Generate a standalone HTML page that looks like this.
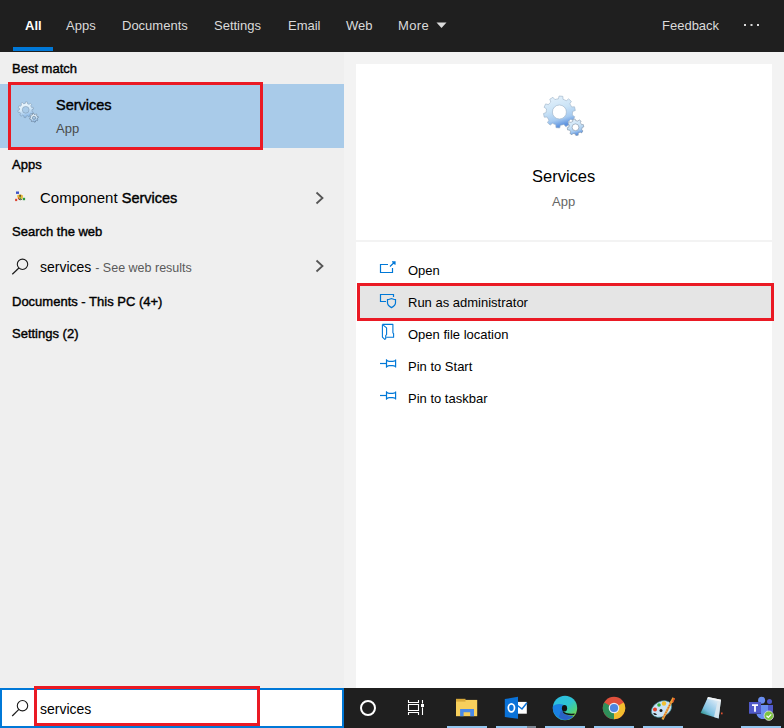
<!DOCTYPE html>
<html><head><meta charset="utf-8">
<style>
*{margin:0;padding:0;box-sizing:border-box}
html,body{width:784px;height:728px;overflow:hidden;background:#f3f3f3;font-family:"Liberation Sans",sans-serif;}
.a{position:absolute;white-space:nowrap;line-height:1}
#top{position:absolute;left:0;top:0;width:784px;height:52px;background:#1f1f1f}
.tab{position:absolute;top:19px;font-size:13px;color:#dadada;line-height:14px}
#uline{position:absolute;left:13px;top:47px;width:40px;height:4px;background:#0078d7}
#left{position:absolute;left:0;top:52px;width:344px;height:636px;background:#efefef}
#card1{position:absolute;left:356px;top:64px;width:416px;height:176px;background:#fff}
#card2{position:absolute;left:356px;top:242px;width:416px;height:446px;background:#fff}
.hdr{position:absolute;left:12px;font-size:13px;color:#000;-webkit-text-stroke:0.4px #000;line-height:14px}
.sb{-webkit-text-stroke:0.4px #000}
.red{position:absolute;border:3px solid #ea1a24}
.act{position:absolute;left:408px;font-size:13px;color:#000;line-height:14px}
.ico{position:absolute}
#search{position:absolute;left:0;top:688px;width:344px;height:40px;background:#fff;border:2px solid #0078d7}
#task{position:absolute;left:344px;top:688px;width:440px;height:40px;background:#1f1f1f}
.ul{position:absolute;top:726px;height:2px;background:#94c6ef}
</style></head><body>
<div id="top">
  <div class="tab" style="left:25px;color:#fff;font-weight:bold">All</div>
  <div class="tab" style="left:66px">Apps</div>
  <div class="tab" style="left:122px">Documents</div>
  <div class="tab" style="left:214px">Settings</div>
  <div class="tab" style="left:288px">Email</div>
  <div class="tab" style="left:346px">Web</div>
  <div class="tab" style="left:398px;letter-spacing:0.4px">More</div>
  <svg class="ico" style="left:436px;top:22px" width="11" height="7" viewBox="0 0 11 7"><path d="M0.5 0.5 L10.5 0.5 L5.5 6 Z" fill="#dadada"/></svg>
  <div class="tab" style="left:662px">Feedback</div>
  <svg class="ico" style="left:743px;top:23px" width="18" height="4" viewBox="0 0 18 4"><rect x="1" y="1" width="2" height="2" fill="#dadada"/><rect x="7.5" y="1" width="2" height="2" fill="#dadada"/><rect x="14" y="1" width="2" height="2" fill="#dadada"/></svg>
  <div id="uline"></div>
</div>

<div style="position:absolute;left:0;top:52px;width:344px;height:636px;background:#efefef"></div>
<div class="hdr" style="top:62px">Best match</div>
<div style="position:absolute;left:0;top:84px;width:344px;height:64px;background:#a9cbe9"></div>
<div class="red" style="left:8px;top:82px;width:255px;height:68px"></div>
<!-- small services icon -->
<svg class="ico" style="left:16px;top:100px" width="24" height="24" viewBox="0 0 24 24">
  <defs><linearGradient id="gs" x1="0" y1="0" x2="0.3" y2="1"><stop offset="0" stop-color="#f6fbff"/><stop offset="0.55" stop-color="#d8ecfa"/><stop offset="1" stop-color="#8fbbe8"/></linearGradient></defs>
  <path fill-rule="evenodd" fill="url(#gs)" stroke="#7890a8" stroke-width="0.5" d="M15.97 10.43 L15.83 11.27 L17.25 12.12 L16.51 13.80 L14.92 13.32 L14.40 13.99 L13.79 14.59 L14.45 16.11 L12.86 17.04 L11.86 15.72 L11.04 15.96 L10.20 16.08 L9.83 17.70 L8.00 17.52 L7.96 15.86 L7.16 15.57 L6.41 15.17 L5.16 16.27 L3.79 15.05 L4.74 13.68 L4.26 12.98 L3.88 12.21 L2.23 12.36 L1.84 10.57 L3.40 10.02 L3.43 9.17 L3.57 8.33 L2.15 7.48 L2.89 5.80 L4.48 6.28 L5.00 5.61 L5.61 5.01 L4.95 3.49 L6.54 2.56 L7.54 3.88 L8.36 3.64 L9.20 3.52 L9.57 1.90 L11.40 2.08 L11.44 3.74 L12.24 4.03 L12.99 4.43 L14.24 3.33 L15.61 4.55 L14.66 5.92 L15.14 6.62 L15.52 7.39 L17.17 7.24 L17.56 9.03 L16.00 9.58 Z M6.30 9.80 a3.40 3.40 0 1 0 6.80 0 a3.40 3.40 0 1 0 -6.80 0 Z"/>
  <path fill-rule="evenodd" fill="url(#gs)" stroke="#56687c" stroke-width="0.5" d="M21.33 18.48 L21.17 19.03 L21.97 19.70 L21.26 20.76 L20.33 20.28 L19.88 20.63 L19.38 20.91 L19.46 21.95 L18.21 22.20 L17.89 21.20 L17.32 21.13 L16.77 20.97 L16.10 21.77 L15.04 21.06 L15.52 20.13 L15.17 19.68 L14.89 19.18 L13.85 19.26 L13.60 18.01 L14.60 17.69 L14.67 17.12 L14.83 16.57 L14.03 15.90 L14.74 14.84 L15.67 15.32 L16.12 14.97 L16.62 14.69 L16.54 13.65 L17.79 13.40 L18.11 14.40 L18.68 14.47 L19.23 14.63 L19.90 13.83 L20.96 14.54 L20.48 15.47 L20.83 15.92 L21.11 16.42 L22.15 16.34 L22.40 17.59 L21.40 17.91 Z M16.40 17.80 a1.60 1.60 0 1 0 3.20 0 a1.60 1.60 0 1 0 -3.20 0 Z"/>
</svg>
<div class="a sb" style="left:56px;top:98px;font-size:14.5px;color:#000">Services</div>
<div class="a" style="left:56px;top:122px;font-size:13px;color:#4a4a4a">App</div>

<div class="hdr" style="top:158px">Apps</div>
<svg class="ico" style="left:14px;top:190px" width="12" height="12" viewBox="0 0 12 12">
  <rect x="2" y="1.5" width="3" height="2.4" fill="#3a52c8"/>
  <path d="M3 5.5 Q5 4.2 7 4.6 L9 5.5 L8.6 8.6 Q6.5 10 4 9 Z" fill="#e6b838"/>
  <rect x="5.5" y="4.8" width="1.2" height="2" fill="#2a2a2a"/>
  <path d="M4.5 8.6 Q6.5 10.3 8.3 8.8 L7.8 9.8 Q6 10.6 4.8 9.6 Z" fill="#202020"/>
  <rect x="4" y="7.5" width="1.2" height="1.6" fill="#d84030"/>
  <rect x="5.8" y="7.5" width="1.2" height="1.6" fill="#40b040"/>
  <rect x="1.1" y="8.8" width="2.1" height="2.3" fill="#dc4432"/>
  <rect x="8.8" y="7.8" width="2.3" height="2.4" fill="#2f9a3c"/>
</svg>
<div class="a" style="left:40px;top:190px;font-size:15px;color:#000">Component <span class="sb" style="font-size:14.5px">Services</span></div>
<svg class="ico" style="left:314px;top:190px" width="12" height="16" viewBox="0 0 12 16"><path d="M2.5 2.5 L8.5 8 L2.5 13.5" fill="none" stroke="#555" stroke-width="1.8"/></svg>

<div class="hdr" style="top:225px">Search the web</div>
<svg class="ico" style="left:11px;top:258px" width="18" height="17" viewBox="0 0 18 17">
  <circle cx="11.5" cy="6.3" r="5.2" fill="none" stroke="#1a1a1a" stroke-width="1.1"/>
  <path d="M7.9 10 L1.3 16.2" stroke="#1a1a1a" stroke-width="1.2"/>
</svg>
<div class="a" style="left:40px;top:260px;font-size:14px;color:#000">services <span style="font-size:12.5px;color:#5a5a5a">- See web results</span></div>
<svg class="ico" style="left:314px;top:258px" width="12" height="16" viewBox="0 0 12 16"><path d="M2.5 2.5 L8.5 8 L2.5 13.5" fill="none" stroke="#555" stroke-width="1.8"/></svg>

<div class="hdr" style="top:295px">Documents - This PC (4+)</div>
<div class="hdr" style="top:327px">Settings (2)</div>

<div id="card1"></div>
<div id="card2"></div>
<!-- big services icon -->
<svg class="ico" style="left:542px;top:95px" width="44" height="44" viewBox="0 0 44 44">
  <defs><linearGradient id="gb" x1="0" y1="0" x2="0.3" y2="1"><stop offset="0" stop-color="#eaf4fc"/><stop offset="0.5" stop-color="#cae3f6"/><stop offset="0.8" stop-color="#a6caf0"/><stop offset="1" stop-color="#5f94e0"/></linearGradient></defs>
  <path fill-rule="evenodd" fill="url(#gb)" stroke="#9ab0c6" stroke-width="0.6" d="M30.53 18.32 L30.24 20.07 L32.70 21.70 L31.20 25.09 L28.34 24.38 L27.25 25.79 L25.98 27.03 L27.01 29.79 L23.81 31.66 L21.92 29.40 L20.21 29.90 L18.44 30.16 L17.66 33.00 L13.97 32.63 L13.76 29.69 L12.09 29.08 L10.51 28.26 L8.21 30.10 L5.44 27.62 L7.00 25.13 L6.00 23.65 L5.21 22.06 L2.27 22.19 L1.48 18.56 L4.21 17.46 L4.27 15.68 L4.56 13.93 L2.10 12.30 L3.60 8.91 L6.46 9.62 L7.55 8.21 L8.82 6.97 L7.79 4.21 L10.99 2.34 L12.88 4.60 L14.59 4.10 L16.36 3.84 L17.14 1.00 L20.83 1.37 L21.04 4.31 L22.71 4.92 L24.29 5.74 L26.59 3.90 L29.36 6.38 L27.80 8.87 L28.80 10.35 L29.59 11.94 L32.53 11.81 L33.32 15.44 L30.59 16.54 Z M10.40 17.00 a7.00 7.00 0 1 0 14.00 0 a7.00 7.00 0 1 0 -14.00 0 Z"/>
  <path fill-rule="evenodd" fill="url(#gb)" stroke="#7d90a6" stroke-width="0.6" d="M39.97 33.61 L39.66 34.68 L40.98 35.89 L39.64 37.88 L38.02 37.11 L37.15 37.80 L36.17 38.34 L36.25 40.13 L33.89 40.59 L33.29 38.90 L32.19 38.77 L31.12 38.46 L29.91 39.78 L27.92 38.44 L28.69 36.82 L28.00 35.95 L27.46 34.97 L25.67 35.05 L25.21 32.69 L26.90 32.09 L27.03 30.99 L27.34 29.92 L26.02 28.71 L27.36 26.72 L28.98 27.49 L29.85 26.80 L30.83 26.26 L30.75 24.47 L33.11 24.01 L33.71 25.70 L34.81 25.83 L35.88 26.14 L37.09 24.82 L39.08 26.16 L38.31 27.78 L39.00 28.65 L39.54 29.63 L41.33 29.55 L41.79 31.91 L40.10 32.51 Z M30.10 32.30 a3.40 3.40 0 1 0 6.80 0 a3.40 3.40 0 1 0 -6.80 0 Z"/>
</svg>
<div class="a" style="left:532px;top:168px;font-size:16.5px;color:#000">Services</div>
<div class="a" style="left:552px;top:195px;font-size:13px;color:#666">App</div>

<div style="position:absolute;left:360px;top:286px;width:411px;height:32px;background:#e5e5e5"></div>
<div class="red" style="left:357px;top:283px;width:417px;height:38px"></div>

<svg class="ico" style="left:378px;top:260px" width="20" height="16" viewBox="0 0 20 16">
  <path d="M10 4.5 H2.5 V12.5 H14.5 V8" fill="none" stroke="#0078d7" stroke-width="1.2"/>
  <path d="M12 6.5 L17 1.8 M14 1.8 H17 V4.8" fill="none" stroke="#0078d7" stroke-width="1.2"/>
</svg>
<div class="act" style="left:408px;top:264px">Open</div>
<svg class="ico" style="left:378px;top:292px" width="20" height="18" viewBox="0 0 20 18">
  <path d="M8 9.5 H2.5 V2.5 H15.5 V5" fill="none" stroke="#0078d7" stroke-width="1.2"/>
  <path d="M9.5 7.6 C11.5 7.6 12.5 6.7 13.5 6.7 C14.5 6.7 15.5 7.6 17.5 7.6 V10.8 C17.5 13.2 15.5 14.6 13.5 15.6 C11.5 14.6 9.5 13.2 9.5 10.8 Z" fill="none" stroke="#0078d7" stroke-width="1.2"/>
</svg>
<div class="act" style="left:408px;top:296px">Run as administrator</div>
<svg class="ico" style="left:378px;top:322px" width="20" height="20" viewBox="0 0 20 20">
  <path d="M4.4 2.4 H14.9 V10.9 L15.6 11.6 V15.3 H8.2" fill="none" stroke="#0078d7" stroke-width="1.1" stroke-linejoin="round"/>
  <path d="M4.4 2.4 V15.1 L6.8 17.4 L7.7 16.8 V13.6 L8.6 12.5 V5.9 L5.2 3.1" fill="none" stroke="#0078d7" stroke-width="1.1" stroke-linejoin="round"/>
</svg>
<div class="act" style="left:408px;top:328px">Open file location</div>
<svg class="ico" style="left:378px;top:357px" width="20" height="14" viewBox="0 0 20 14">
  <path d="M2 6.5 H8" stroke="#0078d7" stroke-width="1.2"/>
  <path d="M8.5 2.2 V10.8 M17.6 2.6 V10.4 M8.5 3.4 Q10.5 4.3 11.2 4.3 H14.8 Q15.6 4.3 17.6 3.6 M8.5 9.6 Q10.5 8.7 11.2 8.7 H14.8 Q15.6 8.7 17.6 9.4" fill="none" stroke="#0078d7" stroke-width="1.2"/>
</svg>
<div class="act" style="left:408px;top:360px">Pin to Start</div>
<svg class="ico" style="left:378px;top:389px" width="20" height="14" viewBox="0 0 20 14">
  <path d="M2 6.5 H8" stroke="#0078d7" stroke-width="1.2"/>
  <path d="M8.5 2.2 V10.8 M17.6 2.6 V10.4 M8.5 3.4 Q10.5 4.3 11.2 4.3 H14.8 Q15.6 4.3 17.6 3.6 M8.5 9.6 Q10.5 8.7 11.2 8.7 H14.8 Q15.6 8.7 17.6 9.4" fill="none" stroke="#0078d7" stroke-width="1.2"/>
</svg>
<div class="act" style="left:408px;top:392px">Pin to taskbar</div>

<div id="search"></div>
<svg class="ico" style="left:11px;top:699px" width="19" height="18" viewBox="0 0 19 18">
  <circle cx="11.5" cy="6.7" r="5.2" fill="none" stroke="#1a1a1a" stroke-width="1.1"/>
  <path d="M7.9 10.4 L1.2 17" stroke="#1a1a1a" stroke-width="1.2"/>
</svg>
<div class="a" style="left:40px;top:702px;font-size:14px;color:#000">services</div>
<div class="red" style="left:34px;top:686px;width:226px;height:40px"></div>

<div id="task"></div>
<svg class="ico" style="left:358px;top:698px" width="20" height="20" viewBox="0 0 20 20"><circle cx="10" cy="10" r="7" fill="none" stroke="#fff" stroke-width="2"/></svg>
<svg class="ico" style="left:406px;top:698px" width="20" height="20" viewBox="0 0 20 20">
  <path d="M2.5 2 V4.5 H12.5 V2 M2.5 6.5 H12.5 V12.5 H2.5 Z M2.5 17 V14.5 H12.5 V17 M16.5 2 V5.5 M16.5 9.5 V17" fill="none" stroke="#fff" stroke-width="1.1"/>
  <rect x="15" y="6" width="3" height="3" fill="#fff"/>
</svg>

<!-- taskbar apps -->
<div class="ul" style="left:447px;width:40px"></div>
<div class="ul" style="left:496px;width:31px"></div>
<div class="ul" style="left:527px;width:9px;background:#7d8896"></div>
<div class="ul" style="left:545px;width:40px"></div>
<div class="ul" style="left:594px;width:40px"></div>
<div class="ul" style="left:643px;width:40px"></div>
<div class="ul" style="left:741px;width:40px"></div>
<!-- explorer -->
<svg class="ico" style="left:454px;top:696px" width="26" height="22" viewBox="0 0 26 22">
  <rect x="2" y="3.9" width="21.2" height="16.3" fill="#f7cf5c"/>
  <rect x="2" y="2.8" width="9.5" height="2.8" fill="#d9aa3a"/>
  <path d="M6.1 12.9 H20 V20.2 H16.2 V16.2 H9.6 V20.2 H6.1 Z" fill="#4a8ae8"/>
</svg>
<!-- outlook -->
<svg class="ico" style="left:504px;top:696px" width="26" height="24" viewBox="0 0 26 24">
  <rect x="14" y="5.9" width="8.8" height="11.8" fill="#fff"/>
  <path d="M13.5 9.5 L18 13 L23 6.8" fill="none" stroke="#0a72d8" stroke-width="1.5"/>
  <path d="M0.8 3 L14 0.8 V22.8 L0.8 21 Z" fill="#0a72d8"/>
  <ellipse cx="7.4" cy="11.8" rx="3.1" ry="4" fill="none" stroke="#fff" stroke-width="1.7"/>
</svg>
<!-- edge -->
<svg class="ico" style="left:552px;top:695px" width="26" height="26" viewBox="0 0 26 26">
  <defs>
    <linearGradient id="eg1" x1="0.3" y1="0" x2="1" y2="0.8"><stop offset="0" stop-color="#2cbfe0"/><stop offset="0.45" stop-color="#2fc4d2"/><stop offset="0.75" stop-color="#48d088"/><stop offset="1" stop-color="#8cd640"/></linearGradient>
  </defs>
  <circle cx="13" cy="13" r="12.2" fill="url(#eg1)"/>
  <path d="M0.9 11 Q6 7.5 12 10 L11 17 Q12 21 21.5 21.5 A12.2 12.2 0 0 1 0.9 11 Z" fill="#1a80e2"/>
  <path d="M9 15 Q11 20.5 21.5 21 Q19 23.5 15 25 Q10 25 7 22 Z" fill="#2a62c4"/>
  <ellipse cx="12.5" cy="13.2" rx="2.6" ry="3.3" fill="#121212"/>
  <path d="M10.5 15.5 Q14 19.5 22.8 18.6 L22.2 20 Q14 21 11 17.5 Z" fill="#121212"/>
</svg>
<!-- chrome -->
<svg class="ico" style="left:602px;top:696px" width="24" height="24" viewBox="0 0 24 24">
  <circle cx="12" cy="12" r="11.2" fill="#e0503c"/>
  <path d="M12 12 L21.7 6.4 A11.2 11.2 0 0 1 12 23.2 Z" fill="#f2bd2e"/>
  <path d="M12 12 L12 23.2 A11.2 11.2 0 0 1 2.3 6.4 Z" fill="#2f8f5a"/>
  <circle cx="12" cy="12" r="5.3" fill="#e8eef8"/>
  <circle cx="12" cy="12" r="4.1" fill="#4f86e0"/>
</svg>
<!-- paint -->
<svg class="ico" style="left:650px;top:696px" width="26" height="24" viewBox="0 0 26 24">
  <ellipse cx="11.5" cy="13" rx="10.8" ry="7.6" transform="rotate(-28 11.5 13)" fill="#c8e2f6" stroke="#2a7a80" stroke-width="0.6"/>
  <path d="M3 17.5 Q5 16 7 18.5 Q5 20 3 17.5 Z" fill="#1f1f1f"/>
  <circle cx="11" cy="14.5" r="1.5" fill="#151515"/>
  <circle cx="5" cy="13.5" r="2" fill="#e0402a"/>
  <circle cx="9" cy="9" r="1.8" fill="#35b040"/>
  <circle cx="14" cy="7.5" r="2.2" fill="#f2c030"/>
  <path d="M12.5 23.5 L21.5 5.5" stroke="#eab040" stroke-width="2.2"/>
  <path d="M13.5 21.5 L21 6.5" stroke="#d84830" stroke-width="1.2" stroke-dasharray="1 1.6"/>
  <path d="M20.3 5.5 L22.5 1.2 L25 2.6 L22.8 7 Z" fill="#f0a030"/>
  <path d="M23.6 2 L25 2.6 L23.2 6.4 L22.2 6 Z" fill="#e04a2a"/>
</svg>
<!-- notepad-like -->
<svg class="ico" style="left:699px;top:696px" width="25" height="24" viewBox="0 0 25 24">
  <defs><linearGradient id="ng" x1="0.8" y1="0" x2="0.1" y2="0.9"><stop offset="0" stop-color="#eef3f6"/><stop offset="0.35" stop-color="#b4d8f0"/><stop offset="0.7" stop-color="#7cc0e0"/><stop offset="1" stop-color="#1f8a7a"/></linearGradient></defs>
  <path d="M9 1 L22 3.7 L19.6 22.4 L1.6 17 Z" fill="url(#ng)"/>
  <path d="M22 3.7 L19.6 22.4 L15 21 L18.5 6 Z" fill="#dfe9ee" opacity="0.85"/>
  <path d="M9 1 L22 3.7 L21.7 5.5 L8.2 2.8 Z" fill="#f4f6f7"/>
  <rect x="22" y="16.5" width="1.6" height="1.8" fill="#e05030"/>
</svg>
<!-- teams -->
<svg class="ico" style="left:748px;top:696px" width="28" height="26" viewBox="0 0 28 26">
  <circle cx="13.6" cy="4.3" r="3.5" fill="#6a8ef0"/>
  <circle cx="21.5" cy="5.4" r="2.5" fill="#5059c9"/>
  <path d="M20 9 H25 V15 C25 17 23.5 18 21.5 18 H20 Z" fill="#5059c9"/>
  <path d="M13 9 H20 V18 C20 21.5 17 23.5 13.5 23 C11 22.5 9 20.5 8.5 18 H13 Z" fill="#6a8ef0"/>
  <rect x="1" y="6" width="12" height="11.7" fill="#5059c9"/>
  <path d="M4 9.2 H10 M7 9.2 V15.8" stroke="#fff" stroke-width="1.8"/>
  <circle cx="20.8" cy="19.7" r="4.7" fill="#7cc440" stroke="#e0e0e0" stroke-width="0.8"/>
  <path d="M18.5 19.8 L20.3 21.4 L23.2 18.4" fill="none" stroke="#fff" stroke-width="1.2"/>
</svg>
</body></html>
